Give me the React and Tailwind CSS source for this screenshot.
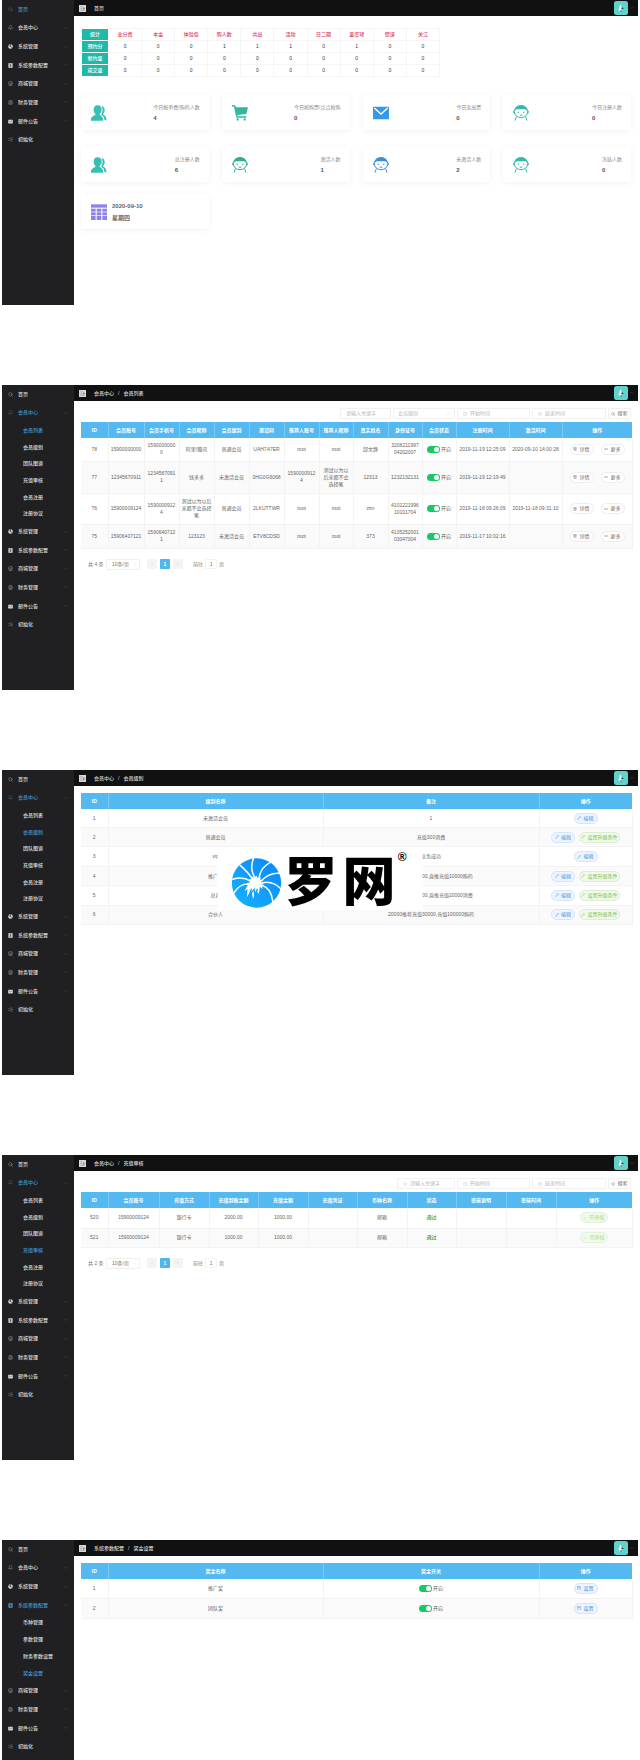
import React from "react";
import {
  Search, Bell, Store, FileText, ListChecks, ChevronDown, ChevronUp,
  Calendar, Pencil, MoreHorizontal, Clock, Check, ChevronLeft, ChevronRight, Trash2,
} from "lucide-react";

function MailIcon({ className }) {
  return (
    <svg viewBox="0 0 24 24" className={className}>
      <rect x="1" y="3" width="22" height="18" rx="2" fill="currentColor" />
      <path d="M4 8l8 6 8-6" fill="none" stroke="#202022" strokeWidth="2" />
    </svg>
  );
}

function PieIcon({ className }) {
  return (
    <svg viewBox="0 0 24 24" className={className}>
      <circle cx="12" cy="12" r="11" fill="currentColor" />
      <path d="M12 12V1M12 12l9 6M12 12L3 7" stroke="#202022" strokeWidth="3" />
    </svg>
  );
}

function BookIcon({ className }) {
  return (
    <svg viewBox="0 0 24 24" className={className}>
      <rect x="2" y="1" width="20" height="22" fill="currentColor" />
      <path d="M8 6h8M8 12h8M8 17h8M12 6v11" stroke="#202022" strokeWidth="2" />
    </svg>
  );
}

const NAV = [
  { label: "首页", icon: Search, leaf: true },
  { label: "会员中心", icon: Bell, subs: ["会员列表", "会员级别", "团队图谱", "充值审核", "会员注册", "注册协议"] },
  { label: "系统管理", icon: PieIcon, solid: true },
  { label: "系统参数配置", icon: BookIcon, solid: true, subs: ["币种管理", "参数管理", "财务参数设置", "奖金设置"] },
  { label: "商城管理", icon: Store },
  { label: "财务管理", icon: FileText },
  { label: "邮件公告", icon: MailIcon, solid: true },
  { label: "初始化", icon: ListChecks, leaf: true },
];

function Sidebar({ open, active, navHeight }) {
  return (
    <aside className="w-[72px] shrink-0 bg-[#202022]">
      <nav className={`flex flex-col ${navHeight}`}>
        {NAV.map((item) => {
          const on = item.label === open || item.label === active;
          const Icon = item.icon;
          const Caret = item.label === open ? ChevronUp : ChevronDown;
          return (
            <React.Fragment key={item.label}>
              <a href="#" className={`flex min-h-0 flex-1 items-center gap-[5px] pr-[6px] pl-[6px] ${on ? "text-[#3f97cf]" : "text-[#dcdcdc]"}`}>
                <Icon className={`size-[5px] shrink-0 ${item.solid ? "" : "opacity-70"}`} />
                <span className="flex-1 whitespace-nowrap font-medium">{item.label}</span>
                {!item.leaf && <Caret className="size-[4px] text-[#77777a]" />}
              </a>
              {item.label === open && (
                <div className={`flex shrink-0 flex-col ${item.subs.length === 6 ? "h-[100px]" : "h-[67px]"}`}>
                  {item.subs.map((s) => (
                    <a key={s} href="#" className={`flex flex-1 items-center pl-[21px] font-medium ${s === active ? "text-[#3f97cf]" : "text-[#dcdcdc]"}`}>
                      {s}
                    </a>
                  ))}
                </div>
              )}
            </React.Fragment>
          );
        })}
      </nav>
    </aside>
  );
}

function TopBar({ crumbs }) {
  return (
    <header className="flex h-[16px] items-center bg-[#111111] pr-[4px] pl-[5px] text-[#d5d5d5]">
      <button type="button" aria-label="折叠菜单" className="block">
        <svg viewBox="0 0 14 14" className="size-[7px]">
          <rect width="14" height="14" fill="#d8d8d8" />
          <path d="M3 3.5h4M3 7h3M3 10.5h8M9 5v4l2.5-2z" stroke="#777" fill="#777" strokeWidth="1" />
        </svg>
      </button>
      <div className="flex flex-1 gap-[4px] pl-[8px]">
        {crumbs.map((c, i) => (
          <React.Fragment key={c}>
            {i > 0 && <span>/</span>}
            <span className="font-medium">{c}</span>
          </React.Fragment>
        ))}
      </div>
      <button type="button" aria-label="账户" className="flex items-center gap-[2px]">
        <svg viewBox="0 0 28 28" className="size-[14px]">
          <rect width="28" height="28" rx="5" fill="#5fd3cc" />
          <path d="M12 7l2 1 1 5 3 2-2 5h-5l-2-3 2-4z" fill="#eefaf9" />
          <path d="M14 14l4-1 1 3-3 1zM13 18l3 1-2 3z" fill="#21454f" />
        </svg>
        <ChevronDown className="size-[4px] text-[#8a8a8a]" />
      </button>
    </header>
  );
}

function Panel({ crumbs, open, active, navHeight = "h-[249px]", minH = "min-h-[305px]", body = "pt-[7px]", children }) {
  return (
    <section className={`relative flex ${minH}`}>
      <Sidebar open={open} active={active} navHeight={navHeight} />
      <div className="min-w-0 flex-1">
        <TopBar crumbs={crumbs} />
        <main className={`pr-[7px] pl-[7px] ${body}`}>{children}</main>
      </div>
    </section>
  );
}

/* ---------- dashboard ---------- */

const STAT_HEAD = ["业分费", "本金", "体验包", "购人数", "共出", "活动", "日二期", "量度项", "错误", "关江"];
const STAT_ROWS = [
  ["预约分", [0, 0, 0, 1, 1, 1, 0, 1, 0, 0]],
  ["新约量", [0, 0, 0, 0, 0, 0, 0, 0, 0, 0]],
  ["成交量", [0, 0, 0, 0, 0, 0, 0, 0, 0, 0]],
];

function StatTable() {
  return (
    <table className="w-[359px] table-fixed border-collapse text-center">
      <thead>
        <tr className="h-[12px]">
          <th className="w-[27px] border border-white bg-[#1fb9a9] font-medium text-white">统计</th>
          {STAT_HEAD.map((h) => (
            <th key={h} className="border border-[#f6f6f6] font-medium text-[#d9435f]">{h}</th>
          ))}
        </tr>
      </thead>
      <tbody>
        {STAT_ROWS.map(([name, vals]) => (
          <tr key={name} className="h-[12px]">
            <th className="border border-white bg-[#1fb9a9] font-medium text-white">{name}</th>
            {vals.map((v, i) => (
              <td key={i} className="border border-[#f6f6f6] text-[#333]">{v}</td>
            ))}
          </tr>
        ))}
      </tbody>
    </table>
  );
}

function PeopleIcon() {
  return (
    <svg viewBox="0 0 48 48" className="size-[16px] text-[#36bfb3]" fill="currentColor">
      <path d="M20 1C12 1 8 6 8 14c0 6 2 9 5 12v4C6 33 0 36 0 43v4h36v-4c0-7-4-10-10-13v-4c3-3 6-6 6-12C32 6 28 1 20 1z" />
      <path d="M31 4c6 0 10 5 10 11 0 5-2 8-4 11v3c4 2 8 5 9 10l-5 4c-1-7-5-10-10-13v-3c4-5 6-16 0-23z" />
      <path d="M41 37l6 6-3 4-6-6z" />
    </svg>
  );
}

function CartIcon() {
  return (
    <svg viewBox="0 0 48 48" className="size-[16px] text-[#34b89b]" fill="currentColor">
      <path d="M0 1h9l3 6h36l-5 20-27 3 1 4h26v4H13L6 5H0z" />
      <circle cx="17" cy="43.500" r="3.500" />
      <circle cx="38" cy="43.500" r="3.500" />
    </svg>
  );
}

function LetterIcon() {
  return (
    <svg viewBox="0 0 48 48" className="size-[16px]">
      <rect x="0" y="5" width="48" height="38" rx="2" fill="#3598e8" />
      <path d="M4 9l20 18L44 9" fill="none" stroke="#fff" strokeWidth="4" />
    </svg>
  );
}

function FaceIcon({ color }) {
  return (
    <svg viewBox="0 0 48 48" className={`size-[16px] ${color}`} fill="none" stroke="currentColor" strokeWidth="3">
      <ellipse cx="24" cy="20" rx="20" ry="18" />
      <path d="M4 19C4 8 13 1 24 1s20 7 20 18c-2-3-4-5-7-6H11c-3 1-5 3-7 6z" fill="currentColor" stroke="none" />
      <path d="M3 25c-3-2-3-6 0-8M45 25c3-2 3-6 0-8M10 35L6 47M38 35l4 12" />
      <path d="M14 22h4M30 22h4M20 30c2 1 6 1 8 0" />
    </svg>
  );
}

function GridIcon() {
  return (
    <svg viewBox="0 0 48 48" className="size-[16px]" fill="#8c83e6">
      <rect x="0" y="1" width="48" height="10" />
      {[14, 25, 36].map((y) => [0, 17, 34].map((x) => <rect key={`${x}-${y}`} x={x} y={y} width="14" height={y === 36 ? 12 : 9} />))}
    </svg>
  );
}

const CARDS = [
  ["今日报单费/购药人数", 4, <PeopleIcon />],
  ["今日抢购票/点点抢购", 0, <CartIcon />],
  ["今日卖出票", 0, <LetterIcon />],
  ["今日注册人数", 0, <FaceIcon color="text-[#34b9b1]" />],
  ["总注册人数", 6, <PeopleIcon />],
  ["激活人数", 1, <FaceIcon color="text-[#2fae94]" />],
  ["未激活人数", 2, <FaceIcon color="text-[#3a90dc]" />],
  ["冻结人数", 0, <FaceIcon color="text-[#34b9b1]" />],
];

const cardClass = "flex h-[35px] items-center rounded-[1px] bg-white pr-[9px] pl-[10px] shadow-[0_1px_6px_rgba(0,0,0,0.06)]";

function Dashboard() {
  return (
    <>
      <StatTable />
      <div className="mt-[18px] grid grid-cols-4 gap-x-[13px] gap-y-[17px]">
        {CARDS.map(([label, value, icon]) => (
          <div key={label} className={`${cardClass} justify-between`}>
            {icon}
            <div className="text-[#8a8a8a]">
              <p className="leading-[11px]">{label}</p>
              <p className="text-[6px] font-bold leading-[11px] text-[#555]">{value}</p>
            </div>
          </div>
        ))}
      </div>
      <div className="mt-[12px] grid grid-cols-4 gap-x-[13px]">
        <div className={`${cardClass} gap-[5px]`}>
          <GridIcon />
          <div className="font-bold text-[#666]">
            <p className="text-[6px] leading-[12px]">2020-09-10</p>
            <p className="text-[6px] leading-[12px]">星期四</p>
          </div>
        </div>
      </div>
    </>
  );
}

/* ---------- shared table parts ---------- */

function DataTable({ cols, heads, rows, height = "" }) {
  return (
    <table className={`w-full table-fixed border-collapse text-center text-[#666] ${height}`}>
      <colgroup>
        {cols.map((c, i) => (
          <col key={i} className={c} />
        ))}
      </colgroup>
      <thead>
        <tr className="h-[16px] bg-[#54b9f0] text-white">
          {heads.map((h) => (
            <th key={h} className="border-r border-[#7ccaf4] p-0 font-bold last:border-r-0">{h}</th>
          ))}
        </tr>
      </thead>
      <tbody>
        {rows.map((r, i) => (
          <tr key={i} className={`border-b border-[#f3f3f3] ${r.h || ""} ${i % 2 ? "bg-[#fafafa]" : ""}`}>
            {r.cells.map((c, j) => (
              <td key={j} className="border-r border-[#f3f3f3] px-[2px] py-0 leading-[7px] break-all">{c}</td>
            ))}
          </tr>
        ))}
      </tbody>
    </table>
  );
}

const TONES = {
  plain: "border-[#ededed] bg-white text-[#666] w-[24px]",
  blue: "border-[#cfe6fc] bg-[#ecf5ff] text-[#4a90d9] w-[24px]",
  green: "border-[#d9f0cb] bg-[#f0f9eb] text-[#7cc258] w-[41px]",
  done: "border-[#e1f3d8] bg-[#f0f9eb] text-[#a4da89] w-[28px]",
};

function Pill({ tone, icon: Icon, children }) {
  return (
    <button type="button" className={`inline-flex h-[11px] items-center justify-center gap-[2px] rounded-full border leading-none whitespace-nowrap ${TONES[tone]}`}>
      <Icon className="size-[4px]" />
      {children}
    </button>
  );
}

function Toggle() {
  return (
    <label className="flex items-center justify-center gap-[1px] whitespace-nowrap">
      <input
        type="checkbox"
        role="switch"
        defaultChecked
        className="flex h-[7px] w-[13px] shrink-0 appearance-none items-center justify-end rounded-full bg-[#17c964] pr-[1px] before:size-[5px] before:rounded-full before:bg-white before:content-['']"
      />
      开启
    </label>
  );
}

function Field({ placeholder, icon: Icon, width }) {
  return (
    <label className={`flex h-[11px] items-center gap-[3px] rounded-[1px] border border-[#f0f0f0] bg-white px-[5px] text-[#bbb] ${width}`}>
      {Icon && <Icon className="size-[4px] shrink-0" />}
      <input type="text" aria-label={placeholder} placeholder={placeholder} className="w-full min-w-0 bg-transparent outline-none placeholder:text-[#b8b8b8]" />
    </label>
  );
}

function SearchButton() {
  return (
    <button type="button" className="flex h-[11px] w-[23px] items-center justify-center gap-[2px] rounded-[1px] border border-[#f0f0f0] text-[#666]">
      <Search className="size-[4px]" />
      搜索
    </button>
  );
}

function Pagination({ total }) {
  const step = "flex size-[10px] items-center justify-center rounded-[1px]";
  return (
    <div className="mt-[10px] flex h-[11px] items-center pl-[7px] text-[#777]">
      <span className="w-[18px]">共 {total} 条</span>
      <label className="flex h-[11px] w-[34px] items-center rounded-[1px] border border-[#efefef] pr-[3px] pl-[5px]">
        <select aria-label="每页条数" className="min-w-0 flex-1 appearance-none bg-transparent">
          <option>10条/页</option>
        </select>
        <ChevronDown className="size-[3px] text-[#bbb]" />
      </label>
      <div className="flex gap-[3px] pl-[7px]">
        <button type="button" aria-label="上一页" className={`${step} bg-[#f4f4f5]`}><ChevronLeft className="size-[4px] text-[#bbb]" /></button>
        <button type="button" className={`${step} bg-[#4fb6ee] font-bold text-white`}>1</button>
        <button type="button" aria-label="下一页" className={`${step} bg-[#f4f4f5]`}><ChevronRight className="size-[4px] text-[#bbb]" /></button>
      </div>
      <label className="flex items-center gap-[2px] pl-[10px]">
        前往
        <input type="text" defaultValue="1" className="h-[10px] w-[12px] rounded-[1px] border border-[#f3f3f3] text-center" />
        页
      </label>
    </div>
  );
}

/* ---------- pages ---------- */

const memberActions = (
  <div className="flex justify-center gap-[7px]">
    <Pill tone="plain" icon={Trash2}>详情</Pill>
    <Pill tone="plain" icon={MoreHorizontal}>更多</Pill>
  </div>
);

const MEMBERS = [
  ["h-[23px]", "78", "15900000000", "15900000000", "阿里/腾讯", "普通会员", "UAH7A7ER", "root", "root", "邱文静", "320821199704202007", "2019-11-19 12:25:09", "2020-09-10 14:00:28"],
  ["h-[32px]", "77", "12345670911", "12345670911", "钱多多", "未激活会员", "0HG0G6068", "15900009124", "测试以为以后来都不会选择笔", "12313", "1232132131", "2019-11-19 12:19:49", ""],
  ["h-[31px]", "76", "15900009124", "15900009124", "测试以为以后来都不会选择笔", "普通会员", "2LKUTTWR", "root", "root", "ztm", "410122199610101704", "2019-11-18 09:26:09", "2019-11-18 09:31:10"],
  ["h-[24px]", "75", "15906407121", "15906407121", "123123", "未激活会员", "ETV8CDSD", "root", "root", "373", "410525200103047004", "2019-11-17 10:02:16", ""],
];

function MemberList() {
  return (
    <>
      <div className="mb-[3px] flex justify-end gap-[2px]">
        <Field placeholder="请输入关键字" width="w-[51px]" />
        <label className="flex h-[11px] w-[62px] items-center rounded-[1px] border border-[#f0f0f0] px-[4px] text-[#b8b8b8]">
          <select aria-label="会员级别" className="min-w-0 flex-1 appearance-none bg-transparent">
            <option>会员级别</option>
          </select>
          <ChevronDown className="size-[4px]" />
        </label>
        <Field placeholder="开始时间" icon={Clock} width="w-[73px]" />
        <Field placeholder="结束时间" icon={Clock} width="w-[74px]" />
        <SearchButton />
      </div>
      <DataTable
        cols={["w-[27px]", "w-[36px]", "w-[35px]", "w-[35px]", "w-[35px]", "w-[35px]", "w-[35px]", "w-[34px]", "w-[35px]", "w-[34px]", "w-[34px]", "w-[53px]", "w-[53px]", "w-[70px]"]}
        heads={["ID", "会员账号", "会员手机号", "会员昵称", "会员级别", "邀请码", "推荐人账号", "推荐人昵称", "真实姓名", "身份证号", "会员状态", "注册时间", "激活时间", "操作"]}
        rows={MEMBERS.map(([h, ...c]) => ({
          h,
          cells: [
            c[0],
            <span className="whitespace-nowrap">{c[1]}</span>,
            ...c.slice(2, 10),
            <Toggle />,
            <span className="whitespace-nowrap">{c[10]}</span>,
            <span className="whitespace-nowrap">{c[11]}</span>,
            memberActions,
          ],
        }))}
      />
      <Pagination total={4} />
    </>
  );
}

const LEVELS = [
  ["未激活会员", "1", false],
  ["普通会员", "充值300消费", true],
  ["vip", "业务成功", false],
  ["推广人", "直推充值人数300,直推充值10000购药", true],
  ["总裁", "直推充值人数800,直推充值20000消费", true],
  ["合伙人", "20000推荐充值30000,充值100000购药", true],
];

function LevelList() {
  return (
    <DataTable
      height="h-[132px]"
      cols={["w-[27px]", "w-[215px]", "w-[216px]", "w-[93px]"]}
      heads={["ID", "级别名称", "备注", "操作"]}
      rows={LEVELS.map(([name, note, more], i) => ({
        cells: [
          i + 1,
          name,
          note,
          <div className="flex justify-center gap-[4px]">
            <Pill tone="blue" icon={Pencil}>编辑</Pill>
            {more && <Pill tone="green" icon={Pencil}>设置升级条件</Pill>}
          </div>,
        ],
      }))}
    />
  );
}

function LogoBadge() {
  return (
    <div className="absolute top-[78px] left-1/2 flex h-[62px] w-[205px] -translate-x-1/2 items-center bg-white pt-[8px] pl-[14px] text-black">
      <svg viewBox="0 0 150 150" className="size-[50px] shrink-0">
        <defs>
          <linearGradient id="shell" x1="0" y1="1" x2="1" y2="0">
            <stop offset="0" stopColor="#16b4fb" />
            <stop offset="1" stopColor="#0a86fb" />
          </linearGradient>
        </defs>
        <circle cx="75" cy="75" r="74" fill="url(#shell)" />
        <g fill="none" stroke="#fff" strokeWidth="4.500" strokeLinecap="round">
          <path d="M72 62C60 45 58 22 66 0" />
          <path d="M82 60C86 42 96 22 116 14" />
          <path d="M92 66C106 52 122 44 144 46" />
          <path d="M94 74C112 70 132 76 148 92" />
          <path d="M90 82C106 86 120 102 124 130" />
          <path d="M62 62C52 46 40 34 26 22" />
          <path d="M58 70C42 60 22 58 4 64" />
          <path d="M54 78C36 76 18 86 8 104" />
        </g>
        <path d="M75 53l4 8 9-4-2 8 10 1-7 6 8 7-8 1 5 13-9-6-3 22-8-14-9 28-6-27-13 22 2-25-9 7 10-20-5-2 13-7-6-7 10-1-3-9 10 5z" fill="#fff" />
        <path d="M60 92l-8 22 16-20 2 20 8-22" fill="none" stroke="#12a2fb" strokeWidth="4" />
      </svg>
      <div className="flex gap-[5px] pl-[3px] text-[53px] leading-[50px] font-black">
        <span>罗</span>
        <span>网</span>
      </div>
      <span className="absolute top-[2px] right-[16px] text-[12px] leading-[14px] font-bold">®</span>
    </div>
  );
}

function RechargeList() {
  const row = (id, amount) => ({
    h: id === "520" ? "h-[20px]" : "h-[19px]",
    cells: [id, "15900009124", "银行卡", amount, "1000.00", "", "邮箱", <span className="font-medium text-[#2f9e4f]">通过</span>, "", "", <Pill tone="done" icon={Check}>已审核</Pill>],
  });
  return (
    <>
      <div className="mb-[3px] flex justify-end gap-[2px]">
        <Field placeholder="请输入关键字" icon={Search} width="w-[58px]" />
        <Field placeholder="开始时间" icon={Clock} width="w-[73px]" />
        <Field placeholder="结束时间" icon={Clock} width="w-[74px]" />
        <SearchButton />
      </div>
      <DataTable
        cols={["w-[27px]", "w-[51px]", "w-[50px]", "w-[49px]", "w-[50px]", "w-[49px]", "w-[50px]", "w-[49px]", "w-[50px]", "w-[50px]", "w-[76px]"]}
        heads={["ID", "会员账号", "充值方式", "充值到账金额", "充值金额", "充值凭证", "币种名称", "状态", "审核说明", "审核时间", "操作"]}
        rows={[row("520", "2000.00"), row("521", "1000.00")]}
      />
      <Pagination total={2} />
    </>
  );
}

function BonusSettings() {
  return (
    <DataTable
      cols={["w-[27px]", "w-[215px]", "w-[216px]", "w-[93px]"]}
      heads={["ID", "奖金名称", "奖金开关", "操作"]}
      rows={["推广奖", "团队奖"].map((name, i) => ({
        h: i ? "h-[20px]" : "h-[19px]",
        cells: [i + 1, name, <Toggle />, <Pill tone="blue" icon={Calendar}>设置</Pill>],
      }))}
    />
  );
}

export default function App() {
  return (
    <div className="flex flex-col gap-[80px] bg-white px-[2px] font-['Liberation_Sans','Noto_Sans_CJK_SC',sans-serif] text-[5px] leading-[7px]">
      <Panel crumbs={["首页"]} active="首页" navHeight="h-[149px]" body="pt-[12px]">
        <Dashboard />
      </Panel>
      <Panel crumbs={["会员中心", "会员列表"]} open="会员中心" active="会员列表">
        <MemberList />
      </Panel>
      <Panel crumbs={["会员中心", "会员级别"]} open="会员中心" active="会员级别">
        <LevelList />
        <LogoBadge />
      </Panel>
      <Panel crumbs={["会员中心", "充值审核"]} open="会员中心" active="充值审核">
        <RechargeList />
      </Panel>
      <Panel crumbs={["系统参数配置", "奖金设置"]} open="系统参数配置" active="奖金设置" navHeight="h-[216px]" minH="min-h-[220px]">
        <BonusSettings />
      </Panel>
    </div>
  );
}
